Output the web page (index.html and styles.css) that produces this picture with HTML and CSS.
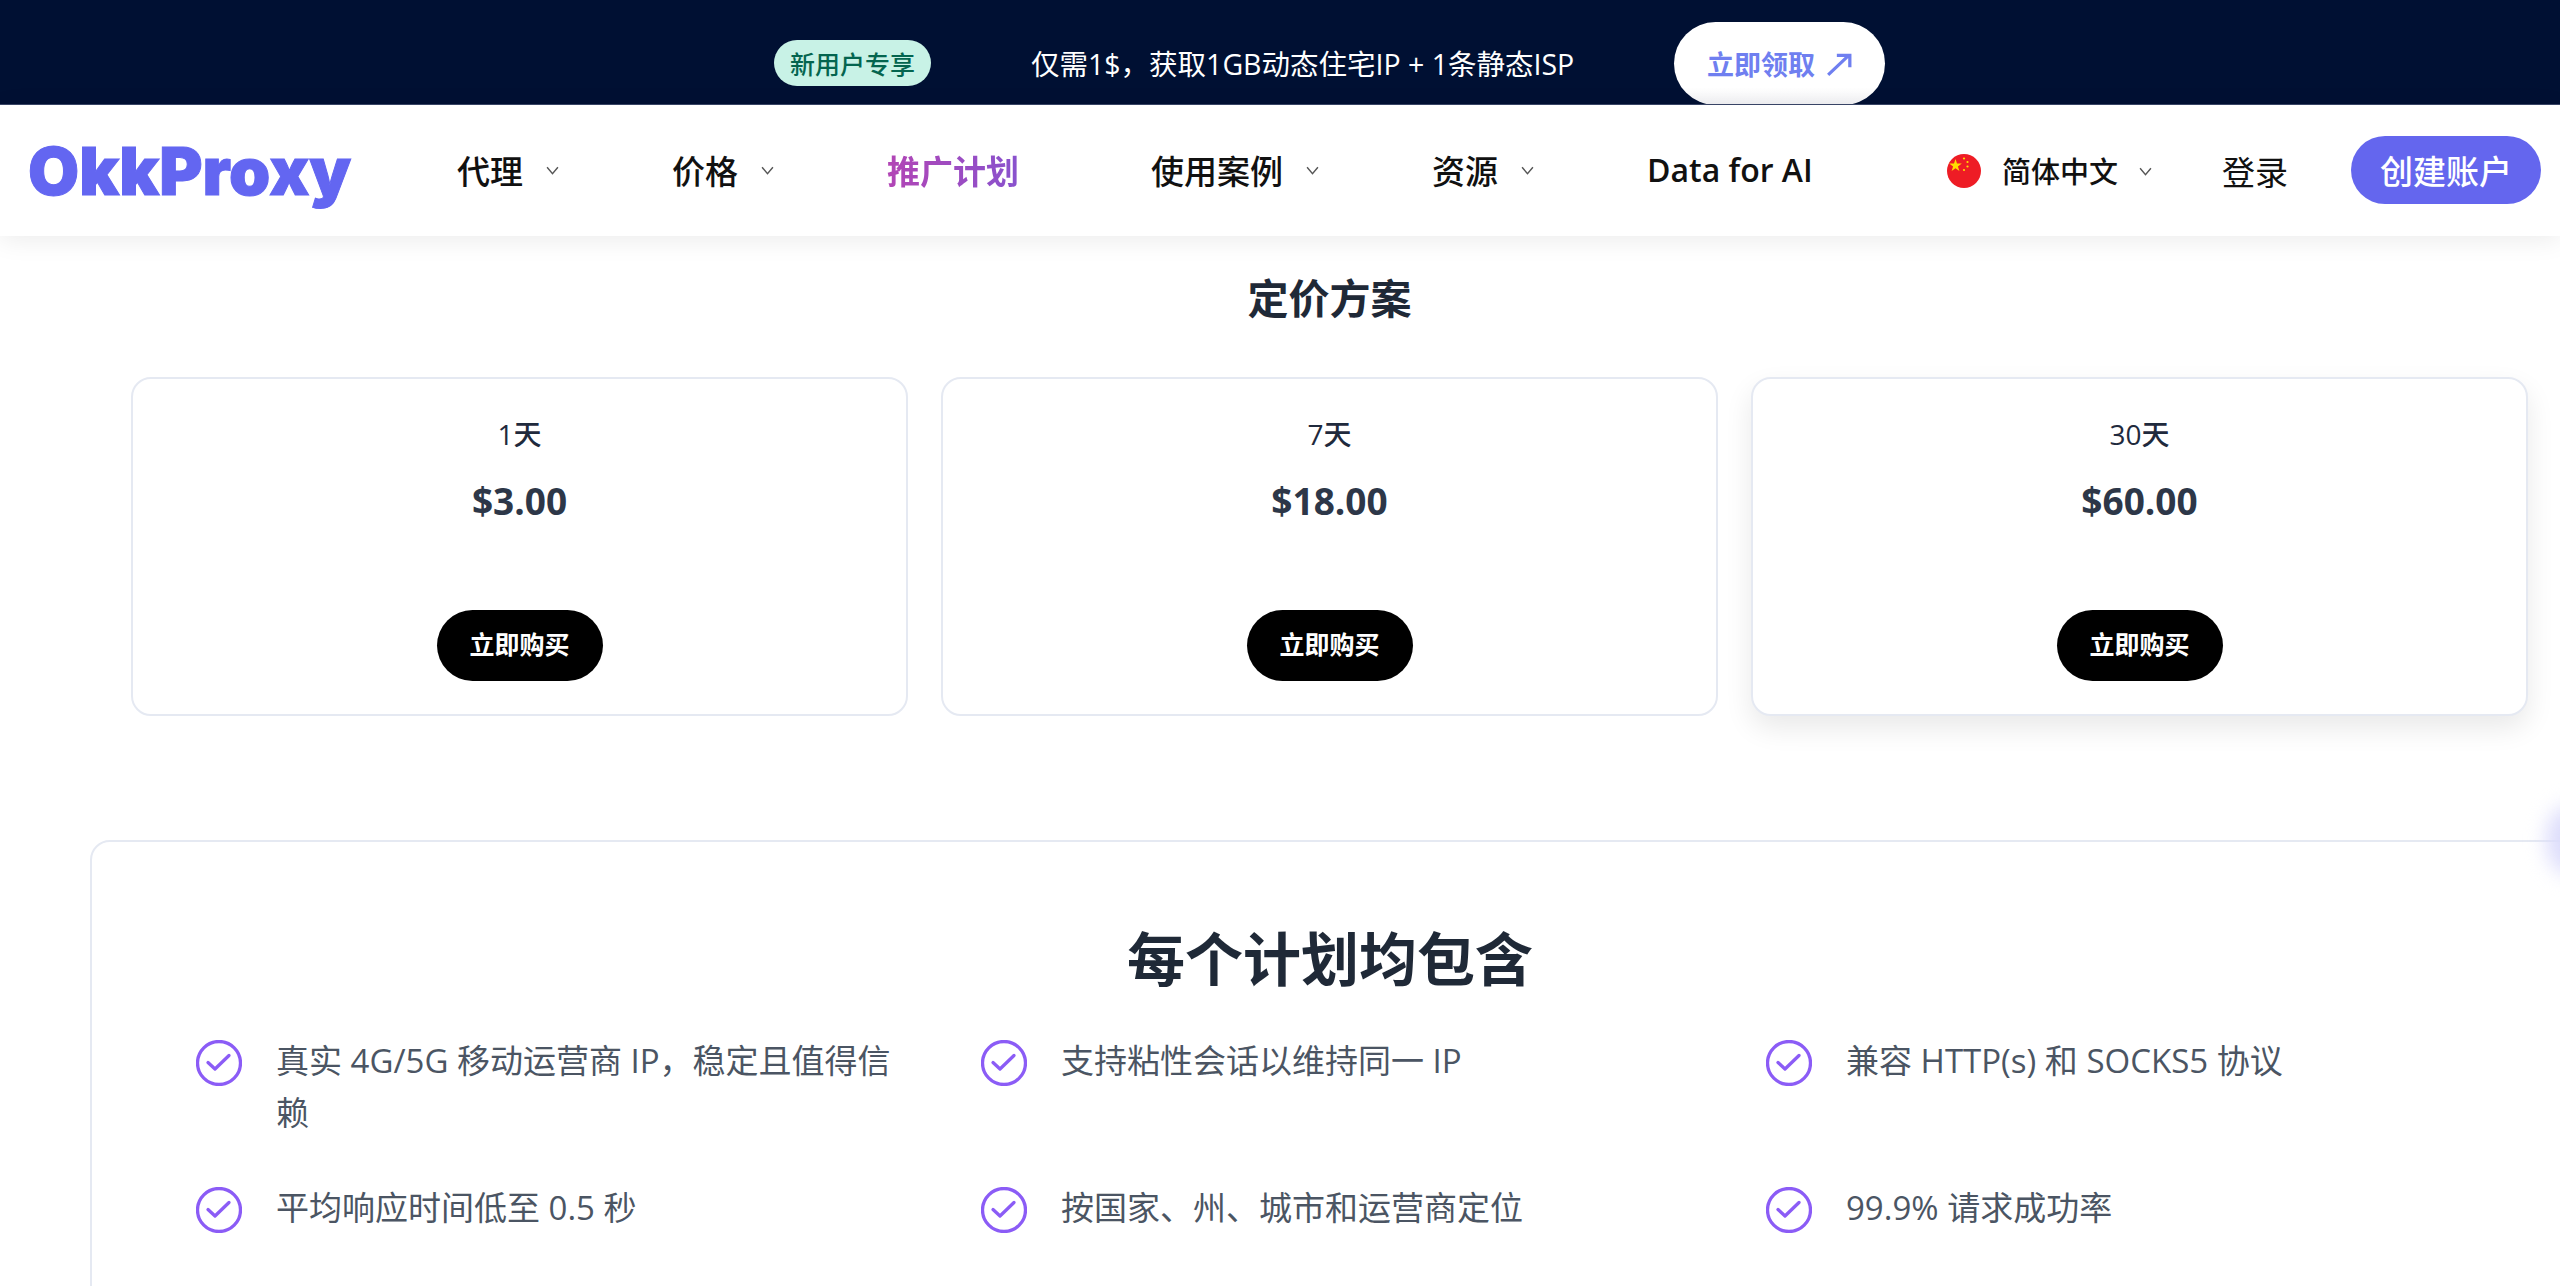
FILE: index.html
```html
<!DOCTYPE html>
<html lang="zh-CN">
<head>
<meta charset="UTF-8" />
<meta name="viewport" content="width=device-width, initial-scale=1" />
<title>OkkProxy - 定价方案</title>
<link rel="stylesheet" href="styles.css">
</head>
<body>
  <!-- 顶部横幅 -->
  <div class="promo">
    <span class="promo-badge">新用户专享</span>
    <span class="promo-text">仅需1$，获取1GB动态住宅IP + 1条静态ISP</span>
    <a href="#" class="promo-btn">立即领取
      <svg class="promo-arrow" viewBox="0 0 24 24"><path d="M2 22L21 4M10 4h12v11"/></svg>
    </a>
  </div>

  <!-- 导航 -->
  <header class="nav">
    <a href="#" class="logo">OkkProxy</a>
    <nav class="nav-links">
      <a href="#" class="nav-item w-proxy">代理 <svg class="chev" viewBox="0 0 12 8"><path d="M1 1l5 6 5-6"/></svg></a>
      <a href="#" class="nav-item w-price">价格 <svg class="chev" viewBox="0 0 12 8"><path d="M1 1l5 6 5-6"/></svg></a>
      <a href="#" class="nav-item nav-promo w-aff">推广计划</a>
      <a href="#" class="nav-item w-case">使用案例 <svg class="chev" viewBox="0 0 12 8"><path d="M1 1l5 6 5-6"/></svg></a>
      <a href="#" class="nav-item w-res">资源 <svg class="chev" viewBox="0 0 12 8"><path d="M1 1l5 6 5-6"/></svg></a>
      <a href="#" class="nav-item nav-data">Data for AI</a>
    </nav>
    <div class="nav-right">
      <a href="#" class="lang">
        <svg class="flag" viewBox="0 0 34 34">
          <circle cx="17" cy="17" r="17" fill="#ee1c25"/>
          <path d="M8.500 5l1.500 4.600h4.800l-3.900 2.800 1.500 4.600-3.900-2.800-3.900 2.800 1.500-4.600-3.900-2.800h4.800z" fill="#ffde00"/>
          <circle cx="17" cy="4.500" r="1.100" fill="#ffde00"/>
          <circle cx="20.500" cy="8" r="1.100" fill="#ffde00"/>
          <circle cx="20.500" cy="12.500" r="1.100" fill="#ffde00"/>
          <circle cx="17" cy="16" r="1.100" fill="#ffde00"/>
        </svg>
        <span class="lang-name">简体中文</span>
        <svg class="chev" viewBox="0 0 12 8"><path d="M1 1l5 6 5-6"/></svg>
      </a>
      <a href="#" class="login">登录</a>
      <a href="#" class="signup">创建账户</a>
    </div>
  </header>

  <main>
    <div class="pricing">
      <h2 class="pricing-title">定价方案</h2>
      <div class="plans">
        <div class="plan">
          <div class="plan-name">1天</div>
          <div class="plan-price">$3.00</div>
          <button class="buy">立即购买</button>
        </div>
        <div class="plan">
          <div class="plan-name">7天</div>
          <div class="plan-price">$18.00</div>
          <button class="buy">立即购买</button>
        </div>
        <div class="plan plan-hover">
          <div class="plan-name">30天</div>
          <div class="plan-price">$60.00</div>
          <button class="buy">立即购买</button>
        </div>
      </div>
    </div>

    <section class="included">
      <h2 class="included-title">每个计划均包含</h2>
      <ul class="features">
        <li><svg class="check" viewBox="0 0 46 46"><circle cx="23" cy="23" r="21.500"/><path d="M12 22.500l7 6.500L33 15.500"/></svg><span>真实 4G/5G 移动运营商 IP，稳定且值得信赖</span></li>
        <li><svg class="check" viewBox="0 0 46 46"><circle cx="23" cy="23" r="21.500"/><path d="M12 22.500l7 6.500L33 15.500"/></svg><span>支持粘性会话以维持同一 IP</span></li>
        <li><svg class="check" viewBox="0 0 46 46"><circle cx="23" cy="23" r="21.500"/><path d="M12 22.500l7 6.500L33 15.500"/></svg><span>兼容 HTTP(s) 和 SOCKS5 协议</span></li>
        <li><svg class="check" viewBox="0 0 46 46"><circle cx="23" cy="23" r="21.500"/><path d="M12 22.500l7 6.500L33 15.500"/></svg><span>平均响应时间低至 0.5 秒</span></li>
        <li><svg class="check" viewBox="0 0 46 46"><circle cx="23" cy="23" r="21.500"/><path d="M12 22.500l7 6.500L33 15.500"/></svg><span>按国家、州、城市和运营商定位</span></li>
        <li><svg class="check" viewBox="0 0 46 46"><circle cx="23" cy="23" r="21.500"/><path d="M12 22.500l7 6.500L33 15.500"/></svg><span>99.9% 请求成功率</span></li>
      </ul>
    </section>
  </main>

  <div class="side-glow"></div>
</body>
</html>
```

FILE: styles.css
```css
:root {
  --roxo: #6366f1;
  --texto: #1f2937;
  --texto-suave: #4b5563;
  --borda: #e5e9f2;
}
html, body {
  margin: 0;
  padding: 0;
  height: 1286px;
  overflow: hidden;
}
body {
  font-family: "Open Sans", "Noto Sans CJK SC", sans-serif;
  background: #fff;
  color: var(--texto);
  position: relative;
}
a {
  text-decoration: none;
  color: inherit;
}

/* banner */
.promo {
  height: 105px;
  box-sizing: border-box;
  padding: 22px 0 0 774px;
  background: #001033;
  display: flex;
  align-items: flex-start;
  overflow: hidden;
  border-bottom: 1px solid #3a4668;
}
.promo-badge {
  margin-top: 18px;
  width: 157px;
  height: 46px;
  border-radius: 23px;
  background: #c8f2e6;
  color: #04654f;
  font-size: 25px;
  font-weight: 500;
  display: flex;
  align-items: center;
  justify-content: center;
}
.promo-text {
  margin: 20px 0 0 100px;
  width: 643px;
  color: #fff;
  font-size: 28.500px;
  line-height: 44px;
  white-space: nowrap;
}
.promo-btn {
  width: 211px;
  height: 83px;
  border-radius: 42px;
  background: linear-gradient(#fff 80%, #f1f1f4);
  color: #6f7ff0;
  font-size: 27px;
  font-weight: 700;
  display: flex;
  align-items: center;
  justify-content: center;
  gap: 11px;
}
.promo-arrow {
  width: 26px;
  height: 26px;
  fill: none;
  stroke: #6f7ff0;
  stroke-width: 3;
}

/* nav */
.nav {
  height: 131px;
  display: flex;
  align-items: center;
  background: #fff;
  box-shadow: 0 4px 24px rgba(0,0,0,0.08);
  position: relative;
}
.logo {
  margin-left: 28px;
  width: 429px;
  font-family: "Inter", sans-serif;
  font-weight: 900;
  font-size: 66px;
  color: var(--roxo);
  -webkit-text-stroke: 1px var(--roxo);
}
.nav-links {
  display: flex;
  align-items: center;
  margin-top: -2px;
}
.nav-item {
  display: flex;
  align-items: center;
  gap: 23px;
  color: #111;
  font-size: 33px;
  font-weight: 500;
}
.w-proxy { width: 215px; }
.w-price { width: 215px; }
.w-aff { width: 264px; }
.w-case { width: 281px; }
.w-res { width: 215px; }
.nav-promo {
  background: linear-gradient(90deg, #b245b5, #5f5fe6);
  -webkit-background-clip: text;
  background-clip: text;
  color: transparent;
  font-weight: 700;
}
.chev {
  width: 13px;
  height: 9px;
  margin-top: 2px;
  fill: none;
  stroke: #555;
  stroke-width: 1.300;
}
.nav-data {
  width: 299px;
  font-size: 32px;
  font-weight: 600;
}
.nav-right {
  display: flex;
  align-items: center;
}
.lang {
  display: flex;
  align-items: center;
  color: #111;
  font-size: 29px;
  font-weight: 500;
  width: 276px;
}
.flag {
  width: 34px;
  height: 34px;
  margin-left: 1px;
}
.lang-name {
  margin: -2px 21px 0 21px;
}
.login {
  width: 129px;
  font-size: 33px;
  color: #111;
}
.signup {
  width: 190px;
  height: 68px;
  margin-top: -2px;
  border-radius: 34px;
  background: #6466ee;
  color: #fff;
  font-size: 33px;
  font-weight: 500;
  display: flex;
  align-items: center;
  justify-content: center;
}

/* pricing */
.pricing {
  margin: 0 32px 0 131px;
}
.pricing-title {
  margin: 0;
  padding-top: 36px;
  text-align: center;
  font-size: 41px;
  font-weight: 700;
  line-height: 52px;
  color: var(--texto);
}
.plans {
  margin-top: 53px;
  display: grid;
  grid-template-columns: repeat(3, 1fr);
  gap: 33px;
}
.plan {
  height: 339px;
  box-sizing: border-box;
  border: 2px solid var(--borda);
  border-radius: 20px;
  background: #fff;
  display: flex;
  flex-direction: column;
  align-items: center;
  padding-top: 35px;
}
.plan-hover {
  box-shadow: 0 12px 28px rgba(0,0,0,0.09);
}
.plan-name {
  font-size: 28px;
  line-height: 40px;
  font-weight: 500;
  color: #1f2a3d;
}
.plan-price {
  margin-top: 25px;
  font-size: 37px;
  line-height: 44px;
  font-weight: 700;
  color: #2d3748;
}
.buy {
  margin-top: 87px;
  width: 166px;
  height: 71px;
  padding: 0 0 5px;
  border: 0;
  border-radius: 36px;
  background: #000;
  color: #fff;
  font-family: inherit;
  font-size: 25px;
  font-weight: 700;
}

/* included */
.included {
  margin: 124px -40px 0 90px;
  height: 560px;
  box-sizing: border-box;
  border: 2px solid var(--borda);
  border-radius: 20px;
  padding: 77px 0 0 104px;
}
.included-title {
  margin: 0 0 0 -106px;
  width: 2480px;
  text-align: center;
  font-size: 58px;
  line-height: 80px;
  font-weight: 700;
  color: var(--texto);
}
.features {
  list-style: none;
  margin: 36px 0 0;
  padding: 0;
  display: grid;
  grid-template-columns: repeat(3, 700px);
  column-gap: 85px;
  row-gap: 43px;
}
.features li {
  display: flex;
  gap: 34px;
  font-size: 33px;
  line-height: 52px;
  color: var(--texto-suave);
}
.check {
  flex: none;
  width: 46px;
  height: 46px;
  margin-top: 5px;
  fill: none;
  stroke: #8b5cf6;
  stroke-width: 3.300;
  stroke-linecap: round;
  stroke-linejoin: round;
}

/* canto direito */
.side-glow {
  position: absolute;
  right: -36px;
  top: 805px;
  width: 50px;
  height: 70px;
  border-radius: 50%;
  background: #dcdcfb;
  filter: blur(10px);
}
```
